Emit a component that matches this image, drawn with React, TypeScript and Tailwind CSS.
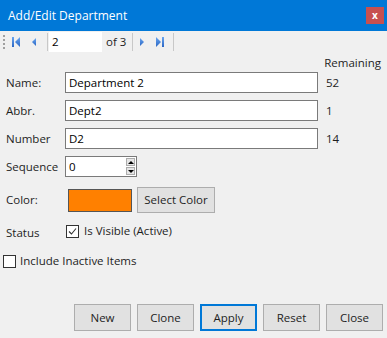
import { useState } from 'react';

const font = { fontFamily: '"Segoe UI", "Open Sans", "Noto Sans", sans-serif' };

function NavIcon({ kind }: { kind: 'first' | 'prev' | 'next' | 'last' }) {
  return (
    <svg width="12" height="12" viewBox="0 0 12 12">
      <defs>
        <linearGradient id={`g-${kind}`} x1="0" y1="0" x2="0" y2="1">
          <stop offset="0" stopColor="#6aa6f0" />
          <stop offset="1" stopColor="#2a66c4" />
        </linearGradient>
      </defs>
      {kind === 'first' && (
        <>
          <rect x="1" y="1" width="2" height="10" fill={`url(#g-${kind})`} />
          <path d="M9 1 L4 6 L9 11 Z" fill={`url(#g-${kind})`} />
        </>
      )}
      {kind === 'prev' && <path d="M8 2 L4 6 L8 10 Z" fill={`url(#g-${kind})`} />}
      {kind === 'next' && <path d="M4 2 L8 6 L4 10 Z" fill={`url(#g-${kind})`} />}
      {kind === 'last' && (
        <>
          <path d="M2 1 L7 6 L2 11 Z" fill={`url(#g-${kind})`} />
          <rect x="8" y="1" width="2" height="10" fill={`url(#g-${kind})`} />
        </>
      )}
    </svg>
  );
}

function Sep({ className }: { className: string }) {
  return <div className={`w-px h-[18px] bg-[#c8c8c8] ${className}`} />;
}

function TextRow({ label, value, remaining }: { label: string; value: string; remaining: string }) {
  return (
    <div className="flex items-center h-[21px]">
      <div className="w-[65px] shrink-0 pl-[6px] text-[11.5px] text-[#1e1e1e]">{label}</div>
      <div className="w-[253px] shrink-0 h-[21px] bg-white border border-[#7a7a7a] flex items-center px-[3px] text-[11.5px] text-black">
        {value}
      </div>
      <div className="pl-[8px] text-[11.5px] text-[#1e1e1e]">{remaining}</div>
    </div>
  );
}

function Btn({ label, primary }: { label: string; primary?: boolean }) {
  return (
    <button
      className={`w-[57px] h-[27px] bg-[#e1e1e1] text-[11.5px] text-[#1e1e1e] flex items-center justify-center border ${
        primary ? 'border-[#0078d7] border-2' : 'border-[#adadad]'
      }`}
    >
      {label}
    </button>
  );
}

export default function App() {
  const [visible, setVisible] = useState(true);
  const [inactive, setInactive] = useState(false);

  return (
    <div className="w-[387px] h-[338px] bg-[#f0f0f0] flex flex-col overflow-hidden" style={font}>
      {/* Title bar */}
      <div className="h-[31px] bg-[#0078d7] flex items-center justify-between shrink-0">
        <span className="pl-[8px] text-white text-[12px]">Add/Edit Department</span>
        <div className="w-[18px] h-[17px] bg-[#c75050] mr-[3px] flex items-center justify-center text-white text-[10px] font-bold leading-none pb-px">
          x
        </div>
      </div>

      {/* Navigator */}
      <div className="h-[22px] flex items-center shrink-0">
        <div className="flex flex-col gap-[2px] ml-[3px] mr-[6px]">
          <div className="w-[2px] h-[2px] bg-[#a0a0a0]" />
          <div className="w-[2px] h-[2px] bg-[#a0a0a0]" />
          <div className="w-[2px] h-[2px] bg-[#a0a0a0]" />
          <div className="w-[2px] h-[2px] bg-[#a0a0a0]" />
        </div>
        <NavIcon kind="first" />
        <div className="ml-[5px]"><NavIcon kind="prev" /></div>
        <Sep className="ml-[7px] mr-px" />
        <div className="w-[53px] h-[20px] bg-white flex items-center pl-[3px] text-[11.5px] text-black">2</div>
        <span className="ml-[4px] text-[11.5px] text-[#1e1e1e]">of 3</span>
        <Sep className="ml-[6px] mr-[3px]" />
        <NavIcon kind="next" />
        <div className="ml-[6px]"><NavIcon kind="last" /></div>
        <Sep className="ml-[7px]" />
      </div>

      {/* Form */}
      <div className="flex flex-col">
        <div className="h-[18px] flex justify-end pr-[6px] text-[11.5px] text-[#1e1e1e] items-end">Remaining</div>
        <div className="flex flex-col gap-[7px] mt-[1px]">
          <TextRow label="Name:" value="Department 2" remaining="52" />
          <TextRow label="Abbr." value="Dept2" remaining="1" />
          <TextRow label="Number" value="D2" remaining="14" />
        </div>

        {/* Sequence */}
        <div className="flex items-center h-[21px] mt-[7px]">
          <div className="w-[65px] shrink-0 pl-[6px] text-[11.5px] text-[#1e1e1e]">Sequence</div>
          <div className="w-[72px] h-[21px] bg-white border border-[#7a7a7a] flex items-center justify-between pl-[3px] text-[11.5px] text-black">
            <span>0</span>
            <div className="flex flex-col mr-[1px] gap-px">
              <div className="w-[9px] h-[8px] bg-[#e6e6e6] border border-[#acacac] flex items-center justify-center">
                <div className="w-0 h-0 border-l-[3px] border-r-[3px] border-b-[3px] border-l-transparent border-r-transparent border-b-black" />
              </div>
              <div className="w-[9px] h-[8px] bg-[#e6e6e6] border border-[#acacac] flex items-center justify-center">
                <div className="w-0 h-0 border-l-[3px] border-r-[3px] border-t-[3px] border-l-transparent border-r-transparent border-t-black" />
              </div>
            </div>
          </div>
        </div>

        {/* Color */}
        <div className="flex items-center mt-[10px]">
          <div className="w-[68px] shrink-0 pl-[6px] text-[11.5px] text-[#1e1e1e]">Color:</div>
          <div className="w-[64px] h-[23px] bg-[#ff8000] border border-[#555555]" />
          <button className="ml-[5px] w-[78px] h-[26px] bg-[#e1e1e1] border border-[#adadad] text-[11.5px] text-[#1e1e1e]">
            Select Color
          </button>
        </div>

        {/* Status */}
        <div className="flex items-center mt-[10px] h-[16px]">
          <div className="w-[66px] shrink-0 pl-[6px] text-[11.5px] text-[#1e1e1e] pt-[3px]">Status</div>
          <button
            onClick={() => setVisible(!visible)}
            className="w-[13px] h-[13px] bg-white border border-[#333333] flex items-center justify-center"
          >
            {visible && (
              <svg width="9" height="9" viewBox="0 0 9 9">
                <path d="M1 4.5 L3.5 7 L8 1.5" stroke="#333" strokeWidth="1.1" fill="none" />
              </svg>
            )}
          </button>
          <span className="ml-[5px] text-[11.5px] text-[#1e1e1e]">Is Visible (Active)</span>
        </div>

        {/* Include inactive */}
        <div className="flex items-center mt-[14px] h-[16px] pl-[3px]">
          <button
            onClick={() => setInactive(!inactive)}
            className="w-[13px] h-[13px] bg-white border border-[#333333]"
          />
          <span className="ml-[4px] text-[11.5px] text-[#1e1e1e]">Include Inactive Items</span>
        </div>
      </div>

      {/* Buttons */}
      <div className="flex justify-end gap-[6px] pr-[4px] mt-auto mb-[7px]">
        <Btn label="New" />
        <Btn label="Clone" />
        <Btn label="Apply" primary />
        <Btn label="Reset" />
        <Btn label="Close" />
      </div>
    </div>
  );
}
